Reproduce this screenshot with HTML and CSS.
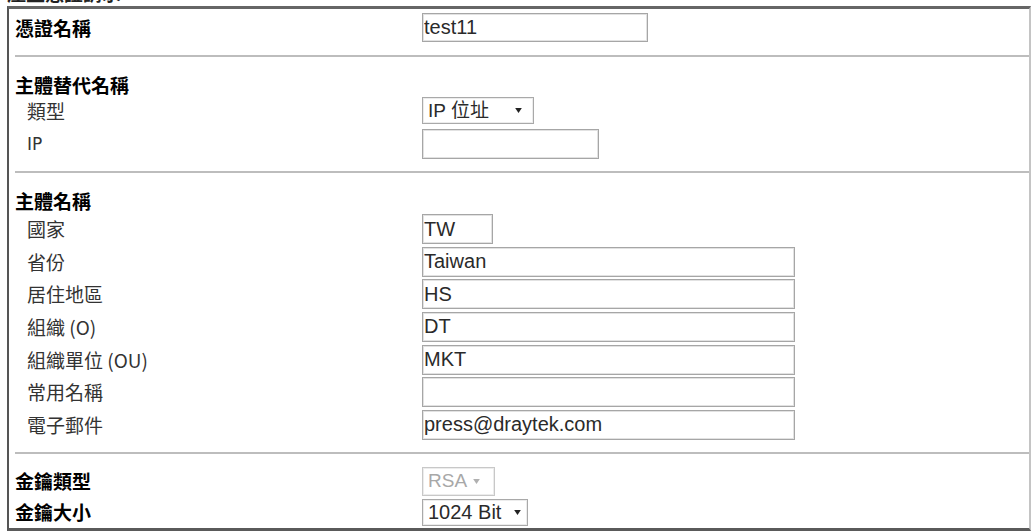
FILE: index.html
```html
<!DOCTYPE html>
<html lang="zh-Hant">
<head>
<meta charset="utf-8">
<title>產生憑證請求</title>
<link rel="stylesheet" href="styles.css">
</head>
<body>
<div class="title"><span>產生憑證請求</span></div>
<div class="panel">
  <section class="sec s1">
    <div class="row">
      <div class="lbl b">憑證名稱</div>
      <div class="field"><input class="inp w226" type="text" value="test11" readonly></div>
    </div>
  </section>
  <div class="sep"></div>
  <section class="sec s2">
    <div class="head lbl b">主體替代名稱</div>
    <div class="row r-type">
      <div class="lbl sub">類型</div>
      <div class="field">
        <div class="sel w112"><span class="sel-text">IP 位址</span><svg class="arr" viewBox="0 0 8 6" width="7" height="5"><path d="M0 0H8L4 6Z"/></svg></div>
      </div>
    </div>
    <div class="row r-ip">
      <div class="lbl sub lat">IP</div>
      <div class="field"><input class="inp w177" type="text" value="" readonly></div>
    </div>
  </section>
  <div class="sep"></div>
  <section class="sec s3">
    <div class="head lbl b">主體名稱</div>
    <div class="rows">
      <div class="row"><div class="lbl sub">國家</div><div class="field"><input class="inp w71" type="text" value="TW" readonly></div></div>
      <div class="row"><div class="lbl sub">省份</div><div class="field"><input class="inp w373" type="text" value="Taiwan" readonly></div></div>
      <div class="row"><div class="lbl sub">居住地區</div><div class="field"><input class="inp w373" type="text" value="HS" readonly></div></div>
      <div class="row"><div class="lbl sub">組織 (O)</div><div class="field"><input class="inp w373" type="text" value="DT" readonly></div></div>
      <div class="row"><div class="lbl sub">組織單位 (OU)</div><div class="field"><input class="inp w373" type="text" value="MKT" readonly></div></div>
      <div class="row"><div class="lbl sub">常用名稱</div><div class="field"><input class="inp w373" type="text" value="" readonly></div></div>
      <div class="row"><div class="lbl sub">電子郵件</div><div class="field"><input class="inp w373" type="text" value="press@draytek.com" readonly></div></div>
    </div>
  </section>
  <div class="sep"></div>
  <section class="sec s4">
    <div class="row r-rsa">
      <div class="lbl b">金鑰類型</div>
      <div class="field">
        <div class="sel w73 disabled"><span class="sel-text">RSA</span><svg class="arr" viewBox="0 0 8 6" width="7" height="5"><path d="M0 0H8L4 6Z"/></svg></div>
      </div>
    </div>
    <div class="row r-size">
      <div class="lbl b">金鑰大小</div>
      <div class="field">
        <div class="sel w106"><span class="sel-text">1024 Bit</span><svg class="arr" viewBox="0 0 8 6" width="7" height="5"><path d="M0 0H8L4 6Z"/></svg></div>
      </div>
    </div>
  </section>
</div>
</body>
</html>
```
FILE: styles.css
```css
html, body {
  margin: 0;
  padding: 0;
  background: #ffffff;
  overflow: hidden;
}

body {
  width: 1031px;
  height: 532px;
  font-family: "Noto Sans CJK TC", "Liberation Sans", sans-serif;
  color: #111;
}

.title {
  height: 6px;
  overflow: hidden;
  padding-left: 7px;
}

.title span {
  display: block;
  margin-top: -17px;
  font-size: 19px;
  line-height: 20px;
  font-weight: 700;
  color: #222;
}

.panel {
  box-sizing: border-box;
  width: 1024px;
  height: 525px;
  margin-left: 7px;
  border-top: 3px solid #666;
  border-left: 2px solid #555;
  border-right: 2px solid #c4c4c4;
  border-bottom: 3px solid #5a5a5a;
  display: flex;
  flex-direction: column;
}

.sep {
  height: 2px;
  margin-left: 6px;
  background: #bdbdbd;
  flex: none;
}

.sec {
  display: flex;
  flex-direction: column;
}

.s1 {
  padding-top: 4px;
  padding-bottom: 13px;
}

.s2 {
  padding-top: 15px;
  padding-bottom: 12px;
}

.s3 {
  padding-top: 15px;
  padding-bottom: 12px;
}

.s4 {
  padding-top: 13px;
  gap: 3px;
}

.head {
  height: 25px;
  display: flex;
  align-items: center;
  padding-left: 6px;
}

.s3 .head {
  height: 26px;
}

.rows {
  display: flex;
  flex-direction: column;
  gap: 2.67px;
}

.row {
  display: grid;
  grid-template-columns: 413px auto;
  align-items: center;
}

.r-ip {
  margin-top: 5px;
}

.lbl {
  font-size: 19px;
  line-height: 24px;
  white-space: nowrap;
}

.lbl.b {
  font-weight: 700;
  color: #000;
  padding-left: 6px;
}

.lbl.sub {
  font-weight: 400;
  color: #333;
  padding-left: 18px;
}

.lbl.lat {
  font-family: "DejaVu Sans", sans-serif;
  font-size: 17px;
}

.field {
  display: flex;
  align-items: center;
}

.inp {
  box-sizing: border-box;
  height: 30px;
  margin: 0;
  padding: 0 1px;
  border: 1px solid #a6a6a6;
  box-shadow: inset 0 0 0 1px #e2e2e2;
  border-radius: 0;
  background: #fff;
  font-family: "Liberation Sans", "Noto Sans CJK TC", sans-serif;
  font-size: 20px;
  color: #2a2a2a;
  outline: none;
}

.w226 { width: 226px; height: 29px; }
.w177 { width: 177px; }
.w71 { width: 71px; }
.w373 { width: 373px; }

.sel {
  box-sizing: border-box;
  height: 27px;
  display: flex;
  align-items: center;
  padding-left: 5px;
  border: 1px solid #a9a9a9;
  box-shadow: inset 0 0 0 1px #ececec;
  background: #fff;
  font-family: "Liberation Sans", "Noto Sans CJK TC", sans-serif;
  font-size: 19px;
  color: #2a2a2a;
  white-space: nowrap;
}

.sel-text {
  line-height: 22px;
}

.arr {
  fill: #222;
  flex: none;
  margin-left: auto;
}

.w112 { width: 112px; }
.w112 .arr { margin-right: 11px; }

.w73 { width: 73px; height: 29px; }
.w73 .arr { margin-left: 6px; }

.w106 { width: 106px; font-size: 20px; }
.w106 .arr { margin-right: 6px; }

.sel.disabled {
  color: #a8a8a8;
  border-color: #c8c8c8;
}

.sel.disabled .arr {
  fill: #b0b0b0;
}
```
